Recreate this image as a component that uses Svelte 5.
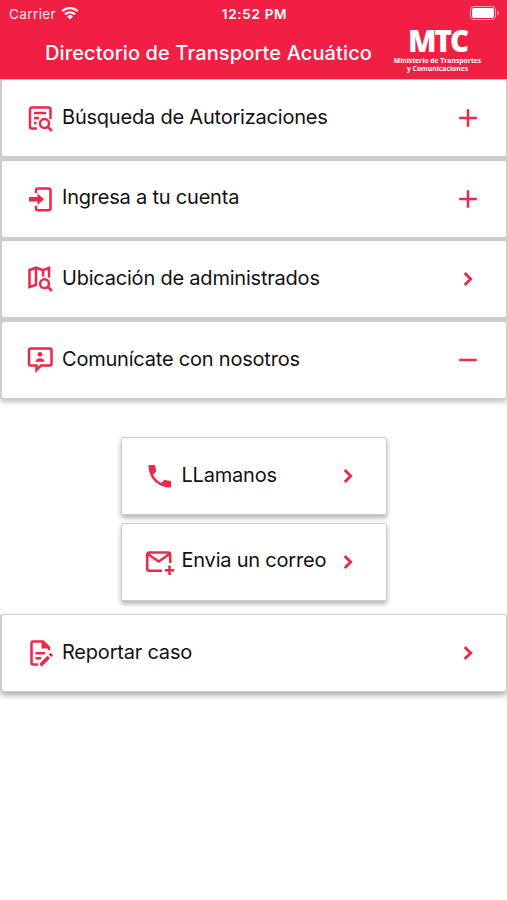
<script>
    const menu = [
        { icon: "search", label: "Búsqueda de Autorizaciones", action: "plus" },
        { icon: "login", label: "Ingresa a tu cuenta", action: "plus" },
        { icon: "map", label: "Ubicación de administrados", action: "chevron" },
        { icon: "contact", label: "Comunícate con nosotros", action: "minus" }
    ];

    const contactOptions = [
        { icon: "phone", label: "LLamanos", action: "chevron" },
        { icon: "mail", label: "Envia un correo", action: "chevron" }
    ];

    const report = { icon: "report", label: "Reportar caso", action: "chevron" };
</script>

{#snippet row(item)}
    <button class="row">
        <svg class="icon" viewBox="0 0 28 28">
            {#if item.icon === "search"}
                <path d="M11 24.5H6a2 2 0 0 1-2-2v-17a2 2 0 0 1 2-2h16.500a2 2 0 0 1 2 2V15M8 9h12M8 14h5M8 19h2.5" />
                <circle cx="18.5" cy="19.5" r="4.5" />
                <path d="M22 23l4 4" />
            {:else if item.icon === "login"}
                <path d="M10 8V5.500a2 2 0 0 1 2-2h10.500a2 2 0 0 1 2 2v17.800a2 2 0 0 1-2 2H12a2 2 0 0 1-2-2v-2.500" />
                <path class="solid" d="M3 12h8.500V8.500l6.500 5.800-6.500 5.800V16.500H3z" />
            {:else if item.icon === "map"}
                <path d="M11 19.500l-7.500 2.500V5L10 2.700l7 2.500 6-2.300v9.600M10 3v16.500M17 5.500v6" />
                <circle cx="18.500" cy="18.700" r="4.400" />
                <path d="M22 22l4 4" />
            {:else if item.icon === "contact"}
                <path d="M4.500 2.500h19.500a1.500 1.500 0 0 1 1.500 1.500v14a1.500 1.500 0 0 1-1.500 1.500H15l-4.500 4.500v-4.500h-6A1.500 1.500 0 0 1 3 18V4a1.500 1.500 0 0 1 1.500-1.500z" />
                <circle class="solid" cx="14" cy="8.300" r="2.400" />
                <path class="solid" d="M9.500 15.800c0-2.200 2-3.500 4.500-3.500s4.500 1.300 4.500 3.500z" />
            {:else if item.icon === "phone"}
                <path class="solid" transform="translate(-1.200 -.75) scale(1.250)" d="M6.620 10.790c1.440 2.830 3.760 5.140 6.590 6.590l2.200-2.200c.27-.27.67-.36 1.020-.24 1.120.37 2.330.57 3.570.57.55 0 1 .45 1 1V20c0 .55-.45 1-1 1-9.390 0-17-7.610-17-17 0-.55.45-1 1-1h3.500c.55 0 1 .45 1 1 0 1.250.2 2.450.57 3.570.11.35.03.74-.25 1.020z" />
            {:else if item.icon === "mail"}
                <path d="M16 22.800H3.200a2 2 0 0 1-2-2V6.500a2 2 0 0 1 2-2h19a2 2 0 0 1 2 2V15M2.500 6.500l10.200 7 10.200-7" />
                <path d="M23.500 17.500v9.500M18.800 22.200h9.500" />
            {:else}
                <path d="M12 25.500H7a1.500 1.500 0 0 1-1.500-1.500V4A1.500 1.500 0 0 1 7 2.500h10l6 6v2.500M9.500 14.200h9.500M9.500 19.200h5.500" />
                <path class="solid" d="M15.500 1.500v8h9z" />
                <path class="pencil" d="M14.500 26.300l8.300-8.300M24 16.800l1.900-1.900" />
            {/if}
        </svg>
        <span class="label">{item.label}</span>
        <svg class="action" viewBox="0 0 20 20">
            {#if item.action === "plus"}
                <path d="M1.200 10h17.600M10 1.200v17.600" />
            {:else if item.action === "minus"}
                <path d="M1.200 10h17.600" />
            {:else}
                <path class="chevron" d="M6.700 4l6 6-6 6" />
            {/if}
        </svg>
    </button>
{/snippet}

<div class="app">
    <header>
        <div class="status">
            <span class="carrier">Carrier
                <svg class="wifi" viewBox="0 0 18 14">
                    <path d="M1.200 5.200a11.200 11.200 0 0 1 15.600 0M4 8.300a7.200 7.200 0 0 1 10 0" />
                    <path class="dot" d="M6 10.400a4.400 4.400 0 0 1 6 0L9 13.600z" />
                </svg>
            </span>
            <span class="time">12:52 PM</span>
            <svg class="battery" viewBox="0 0 30 14">
                <rect class="shell" x=".5" y=".5" width="25" height="13" rx="3.500" />
                <rect x="2" y="2" width="22" height="10" rx="2" />
                <path class="tip" d="M27.300 4.800q1.800.7 1.800 2.200t-1.800 2.200z" />
            </svg>
        </div>
        <div class="titlebar">
            <h1>Directorio de Transporte Acuático</h1>
            <div class="logo">
                <strong>MTC</strong>
                <span>Ministerio de Transportes</span>
                <span>y Comunicaciones</span>
            </div>
        </div>
    </header>

    <nav class="menu">
        {#each menu as item}
            {@render row(item)}
        {/each}
    </nav>

    <div class="options">
        {#each contactOptions as item}
            {@render row(item)}
        {/each}
    </div>

    <div class="single">
        {@render row(report)}
    </div>
</div>

<style>
    :global(body) {
        margin: 0;
        background: #fff;
    }

    .app {
        width: 507px;
        height: 900px;
        overflow: hidden;
        font-family: Inter, "Liberation Sans", sans-serif;
        color: #111;
    }

    header {
        height: 79px;
        background: #f11f43;
        color: #fff;
        border-bottom: 1px solid #f8b9c5;
    }

    .status {
        display: grid;
        grid-template-columns: 1fr auto 1fr;
        align-items: center;
        height: 27px;
        padding: 0 7px 0 9px;
        font-size: 13px;
    }

    .carrier {
        display: flex;
        align-items: center;
        gap: 5px;
        font-size: 13.500px;
        letter-spacing: 0.400px;
        opacity: 0.9;
    }

    .wifi {
        width: 18px;
        height: 14px;
        margin-top: -2px;
        fill: none;
        stroke: #fff;
        stroke-width: 2.300;
    }

    .wifi .dot {
        fill: #fff;
        stroke: none;
    }

    .time {
        font-size: 13.500px;
        font-weight: 600;
        letter-spacing: 0.700px;
    }

    .battery {
        justify-self: end;
        width: 30px;
        height: 14px;
        margin-top: -1px;
        fill: #fff;
    }

    .battery .shell {
        fill: none;
        stroke: #f9a5b4;
    }

    .battery .tip {
        fill: #f9a5b4;
    }

    .titlebar {
        display: flex;
        height: 52px;
        padding-left: 45px;
    }

    h1 {
        width: 349px;
        margin: 0;
        font-size: 20px;
        font-weight: 550;
        line-height: 52px;
        letter-spacing: 0.120px;
        white-space: nowrap;
    }

    .logo {
        display: flex;
        flex-direction: column;
        align-items: center;
        width: 87px;
        font-family: "Open Sans", sans-serif;
        font-size: 6.800px;
        font-weight: 700;
        line-height: 8px;
        white-space: nowrap;
    }

    .logo strong {
        font-size: 29.500px;
        font-weight: 800;
        line-height: 28px;
        letter-spacing: -2px;
        margin-bottom: 2px;
    }

    .menu {
        display: flex;
        flex-direction: column;
        gap: 4.700px;
        padding: 0 1.500px 1px 2px;
        background: #cdcdcd;
        border-radius: 0 0 3px 3px;
        box-shadow: 0 3px 5px rgba(0, 0, 0, 0.25);
    }

    .row {
        display: flex;
        align-items: center;
        box-sizing: border-box;
        width: 100%;
        height: 76px;
        padding: 0 27.500px 0 24px;
        border: none;
        border-radius: 2px;
        background: #fff;
        font: inherit;
        color: inherit;
        text-align: left;
    }

    .icon {
        flex: none;
        width: 28px;
        height: 28px;
        margin-right: 8px;
        overflow: visible;
    }

    .icon,
    .action {
        fill: none;
        stroke: #ee2848;
        stroke-width: 2.500;
    }

    .icon .solid {
        fill: #ee2848;
        stroke: none;
    }

    .icon .pencil {
        stroke-width: 3.600;
    }

    .label {
        flex: 1;
        padding-bottom: 3px;
        font-size: 20px;
        letter-spacing: -0.210px;
        white-space: nowrap;
    }

    .action {
        flex: none;
        width: 20px;
        height: 20px;
    }

    .action .chevron {
        stroke-width: 2.800;
    }

    .options {
        display: flex;
        flex-direction: column;
        align-items: center;
        gap: 7.500px;
        padding: 38px 0 13.200px;
    }

    .options .row {
        box-sizing: content-box;
        width: 212.500px;
        border: 1px solid #cdcdcd;
        box-shadow: 0 3px 5px rgba(0, 0, 0, 0.3);
    }

    .single {
        padding: 1.500px 1.500px 1px 2px;
        background: #cdcdcd;
        border-radius: 3px;
        box-shadow: 0 3px 6px rgba(0, 0, 0, 0.35);
    }
</style>
